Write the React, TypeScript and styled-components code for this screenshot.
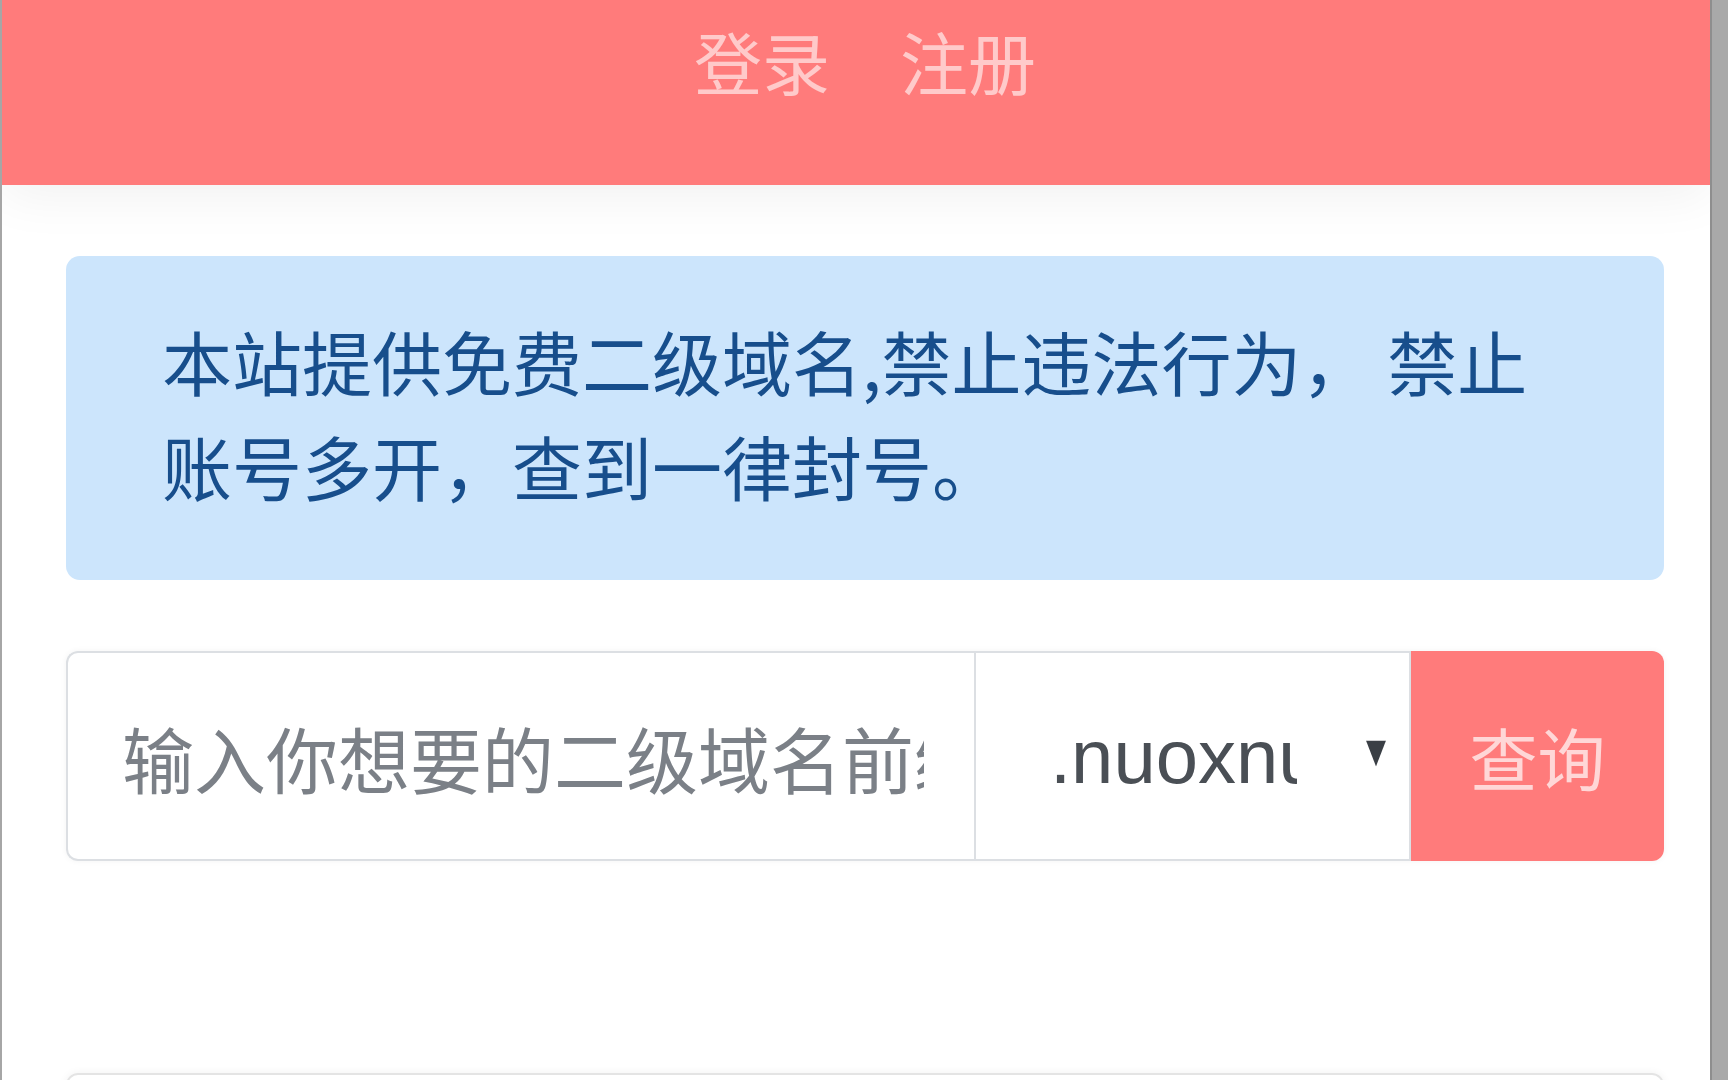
import styled, { createGlobalStyle } from 'styled-components';

const GlobalStyle = createGlobalStyle`
  html, body {
    margin: 0;
    padding: 0;
    height: 100%;
    overflow: hidden;
    background: #ffffff;
  }
  * {
    box-sizing: border-box;
  }
  body {
    font-family: 'Liberation Sans', 'Noto Sans CJK SC', sans-serif;
  }
`;

const App = () => {
  return (
    <Frame>
      <GlobalStyle />
      <Page>
        <Header>
          <NavLink href='#'>登录</NavLink>
          <NavLink href='#'>注册</NavLink>
        </Header>
        <Main>
          <Alert>本站提供免费二级域名,禁止违法行为， 禁止账号多开，查到一律封号。</Alert>
          <InputGroup>
            <DomainInput placeholder='输入你想要的二级域名前缀' />
            <SelectWrap>
              <Suffix defaultValue='.nuoxnu.cn'>
                <option value='.nuoxnu.cn'>.nuoxnu.cn</option>
              </Suffix>
              <Caret viewBox='0 0 20 26' aria-hidden='true'>
                <polygon points='0,0 20,0 10,26' fill='currentColor' />
              </Caret>
            </SelectWrap>
            <SearchButton>查询</SearchButton>
          </InputGroup>
          <Card />
        </Main>
      </Page>
      <Scrollbar />
    </Frame>
  );
};

const Frame = styled.div`
  display: flex;
  height: 100vh;
  overflow: hidden;
`;

const Page = styled.div`
  flex: 1;
  min-width: 0;
  border-left: 2px solid #a6a6a6;
  overflow: hidden;
`;

const Header = styled.header`
  display: flex;
  justify-content: center;
  align-items: flex-start;
  gap: 70px;
  height: 185px;
  padding: 10px 0 0 18px;
  background-color: #ff7b7b;
  box-shadow: 0 10px 50px rgba(0, 0, 0, 0.06);
  position: relative;
  z-index: 1;
`;

const NavLink = styled.a`
  font-family: 'Noto Sans CJK SC', sans-serif;
  font-size: 68px;
  line-height: 1.5;
  color: rgba(255, 255, 255, 0.6);
  text-decoration: none;
`;

const Main = styled.main`
  padding: 71px 46px 0 64px;
`;

const Alert = styled.div`
  padding: 52px 96px 62px;
  margin-bottom: 71px;
  border-radius: 14px;
  background-color: #cce5fc;
  color: #174e8c;
  font-family: 'Noto Sans CJK SC', sans-serif;
  font-size: 70px;
  line-height: 1.5;
`;

const InputGroup = styled.div`
  display: flex;
  height: 210px;
  border-radius: 12px;
  box-shadow: 0 0 6px rgba(0, 0, 0, 0.05);
`;

const DomainInput = styled.input`
  flex: 0 0 908px;
  min-width: 0;
  padding: 0 50px 0 54px;
  border: 2px solid #dcdfe3;
  border-right: none;
  border-radius: 12px 0 0 12px;
  font-family: 'Noto Sans CJK SC', sans-serif;
  font-size: 72px;
  color: #495057;
  outline: none;
  &::placeholder {
    color: #7b8087;
  }
`;

const SelectWrap = styled.div`
  position: relative;
  flex: 0 0 437px;
  min-width: 0;
  display: flex;
`;

const Suffix = styled.select`
  width: 100%;
  min-width: 0;
  appearance: none;
  padding: 0 112px 0 74px;
  border: 2px solid #dcdfe3;
  border-radius: 0;
  background: #ffffff;
  font-family: 'Liberation Sans', sans-serif;
  font-size: 76px;
  color: #4a4f55;
  outline: none;
`;

const Caret = styled.svg`
  position: absolute;
  top: 50%;
  right: 25px;
  width: 20px;
  height: 26px;
  transform: translateY(-60%);
  color: #3a3f45;
  pointer-events: none;
`;

const SearchButton = styled.button`
  flex: 1;
  min-width: 0;
  border: none;
  border-radius: 0 12px 12px 0;
  background-color: #ff7b7b;
  color: rgba(255, 255, 255, 0.7);
  font-family: 'Noto Sans CJK SC', sans-serif;
  font-size: 68px;
  white-space: nowrap;
  cursor: pointer;
`;

const Card = styled.div`
  margin-top: 212px;
  height: 200px;
  border: 2px solid #e4e4e4;
  border-radius: 12px;
  box-shadow: 0 0 8px rgba(0, 0, 0, 0.06);
`;

const Scrollbar = styled.div`
  flex: 0 0 18px;
  background-color: #a9a9a9;
  border-left: 2px solid #8e8e8e;
`;

export default App;
